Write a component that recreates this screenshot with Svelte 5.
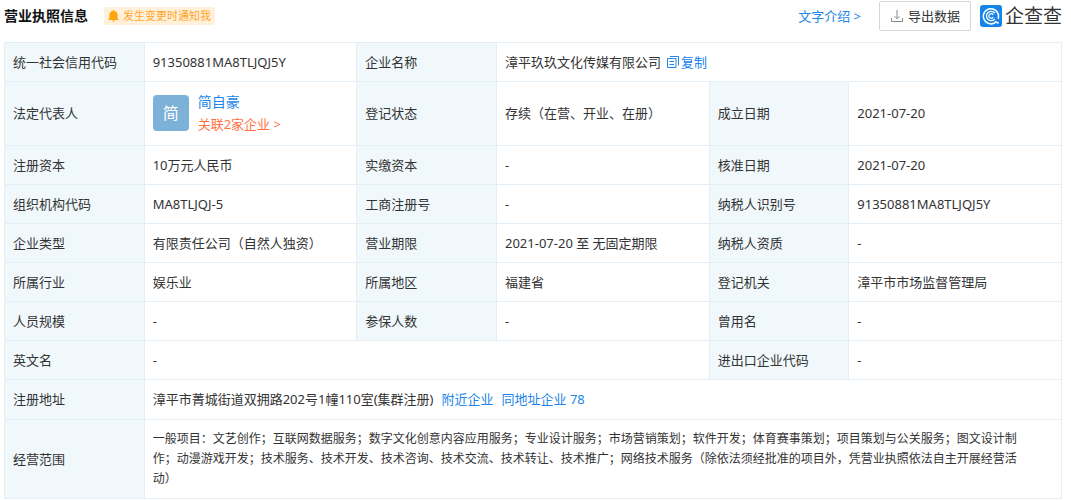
<script>
  const rows = [
    [['注册资本', '10万元人民币'], ['实缴资本', '-'], ['核准日期', '2021-07-20']],
    [['组织机构代码', 'MA8TLJQJ-5'], ['工商注册号', '-'], ['纳税人识别号', '91350881MA8TLJQJ5Y']],
    [['企业类型', '有限责任公司（自然人独资）'], ['营业期限', '2021-07-20 至 无固定期限'], ['纳税人资质', '-']],
    [['所属行业', '娱乐业'], ['所属地区', '福建省'], ['登记机关', '漳平市市场监督管理局']],
    [['人员规模', '-'], ['参保人数', '-'], ['曾用名', '-']],
  ];
</script>

<main>
  <header>
    <h1>营业执照信息</h1>
    <button class="notify" type="button">
      <svg width="11" height="12" viewBox="0 0 11 12" aria-hidden="true">
        <path fill="#ffa30f" d="M5.500 0.300c.6 0 1 .3 1.100.8C8.500 1.600 9.600 3.100 9.600 5v3.300l.9 1v.7H.5v-.7l.9-1V5c0-1.900 1.100-3.400 3-3.900.1-.5.5-.8 1.100-.8zM3.800 10.500h3.400c-.2.800-.9 1.200-1.700 1.200s-1.500-.4-1.700-1.200z" />
      </svg>
      <span>发生变更时通知我</span>
    </button>
    <div class="actions">
      <a href="#intro">文字介绍 &gt;</a>
      <button class="export" type="button">
        <svg width="14" height="14" viewBox="0 0 14 14" fill="none" stroke="#888" aria-hidden="true">
          <path d="M7 1v8.500M4.500 7.200L7 9.700l2.500-2.500M1.500 9v3.500h11V9" />
        </svg>
        <span>导出数据</span>
      </button>
      <div class="brand">
        <svg width="22" height="22" viewBox="0 0 22 22" fill="none" aria-hidden="true">
          <rect width="22" height="22" rx="3" fill="#1484e8" />
          <g stroke="#fff" stroke-linecap="round">
            <path stroke-width="1.500" d="M15.800 17.100A7.600 7.600 0 1 1 18.300 13.200" />
            <path stroke-width="1.300" d="M14.500 7.700a4.700 4.700 0 1 0 0 6.600" />
            <path stroke-width="1.200" d="M12.900 9.500a2.300 2.300 0 1 0 0 3" />
            <path stroke-width="1.500" d="M15.500 16.800l2.700 1.200" />
          </g>
        </svg>
        <span>企查查</span>
      </div>
    </div>
  </header>

  <table>
    <colgroup>
      <col class="label" /><col class="value" />
      <col class="label" /><col class="value" />
      <col class="label" /><col class="value" />
    </colgroup>
    <tbody>
      <tr>
        <th scope="row">统一社会信用代码</th>
        <td>91350881MA8TLJQJ5Y</td>
        <th scope="row">企业名称</th>
        <td colspan="3">
          <div class="inline">
            <span>漳平玖玖文化传媒有限公司</span>
            <button class="copy" type="button">
              <svg width="12" height="12" viewBox="0 0 12 12" fill="none" stroke="#2185ea" aria-hidden="true">
                <path d="M3 .5h8.500v9M.5 2.500h8.500v9H.5zM2.500 5.500h4.500M2.500 8.500h4.500" />
              </svg>
              <span>复制</span>
            </button>
          </div>
        </td>
      </tr>
      <tr class="person-row">
        <th scope="row">法定代表人</th>
        <td>
          <div class="person">
            <span class="avatar">简</span>
            <div class="who">
              <a class="name" href="#person">简自豪</a>
              <a class="related" href="#related">关联2家企业 &gt;</a>
            </div>
          </div>
        </td>
        <th scope="row">登记状态</th>
        <td>存续（在营、开业、在册）</td>
        <th scope="row">成立日期</th>
        <td>2021-07-20</td>
      </tr>
      {#each rows as row}
        <tr>
          {#each row as [label, value]}
            <th scope="row">{label}</th>
            <td>{value}</td>
          {/each}
        </tr>
      {/each}
      <tr>
        <th scope="row">英文名</th>
        <td colspan="3">-</td>
        <th scope="row">进出口企业代码</th>
        <td>-</td>
      </tr>
      <tr class="address-row">
        <th scope="row">注册地址</th>
        <td colspan="5">
          <div class="address">
            <span>漳平市菁城街道双拥路202号1幢110室(集群注册)</span>
            <a href="#nearby">附近企业</a>
            <a href="#same">同地址企业 78</a>
          </div>
        </td>
      </tr>
      <tr class="scope-row">
        <th scope="row">经营范围</th>
        <td colspan="5">一般项目：文艺创作；互联网数据服务；数字文化创意内容应用服务；专业设计服务；市场营销策划；软件开发；体育赛事策划；项目策划与公关服务；图文设计制作；动漫游戏开发；技术服务、技术开发、技术咨询、技术交流、技术转让、技术推广；网络技术服务（除依法须经批准的项目外，凭营业执照依法自主开展经营活动）</td>
      </tr>
    </tbody>
  </table>
</main>

<style>
  :global(body) {
    background: #fff;
  }
  main {
    padding: 1px 9px 0 4px;
    font-family: "Noto Sans", "Noto Sans CJK SC", sans-serif;
    font-size: 13px;
    line-height: 20px;
    color: #333;
  }
  header {
    display: flex;
    align-items: center;
    height: 30px;
    margin-bottom: 11px;
  }
  h1 {
    margin: 0;
    font-size: 14px;
    font-weight: 700;
    color: #111;
  }
  button {
    font: inherit;
    cursor: pointer;
  }
  a {
    color: #2185ea;
    text-decoration: none;
  }
  .notify {
    display: flex;
    align-items: center;
    gap: 4px;
    height: 18px;
    margin-left: 16px;
    padding: 0 4px;
    border: 0;
    border-radius: 2px;
    background: #fff0d9;
    color: #ffa62b;
    font-size: 11px;
    line-height: 18px;
  }
  .actions {
    display: flex;
    align-items: center;
    margin-left: auto;
  }
  .export {
    display: flex;
    align-items: center;
    gap: 4px;
    height: 30px;
    margin-left: 18px;
    padding: 0 10px;
    border: 1px solid #d6d6d6;
    border-radius: 2px;
    background: #fff;
    color: #333;
  }
  .brand {
    display: flex;
    align-items: center;
    gap: 3px;
    margin-left: 9px;
    font-size: 19px;
    line-height: 22px;
  }
  table {
    width: 100%;
    border-collapse: collapse;
    table-layout: fixed;
  }
  .label {
    width: 13.2%;
  }
  .value {
    width: 20.1%;
  }
  tr {
    height: 39px;
  }
  .person-row {
    height: 64px;
  }
  .address-row {
    height: 40px;
  }
  .scope-row {
    height: 79px;
  }
  th,
  td {
    padding: 0 8px 1px;
    border: 1px solid #e4eef6;
    text-align: left;
    vertical-align: middle;
    font-weight: 400;
  }
  th {
    background: #f0f8fc;
  }
  th + td {
    border-left-color: #f0f8fc;
  }
  .inline,
  .address,
  .person {
    display: flex;
    align-items: center;
  }
  .inline {
    gap: 6px;
  }
  .address {
    gap: 8px;
  }
  .copy {
    display: flex;
    align-items: center;
    gap: 2px;
    padding: 0;
    border: 0;
    background: none;
    color: #2185ea;
  }
  .person {
    gap: 9px;
  }
  .avatar {
    width: 36px;
    height: 36px;
    border-radius: 4px;
    background: #7cb1d8;
    color: #fff;
    font-size: 16px;
    line-height: 36px;
    text-align: center;
  }
  .who {
    display: flex;
    flex-direction: column;
    gap: 2px;
  }
  .name {
    font-size: 14px;
  }
  .related {
    color: #ff7242;
  }
  .scope-row td {
    padding-right: 40px;
    font-size: 12px;
  }
</style>
